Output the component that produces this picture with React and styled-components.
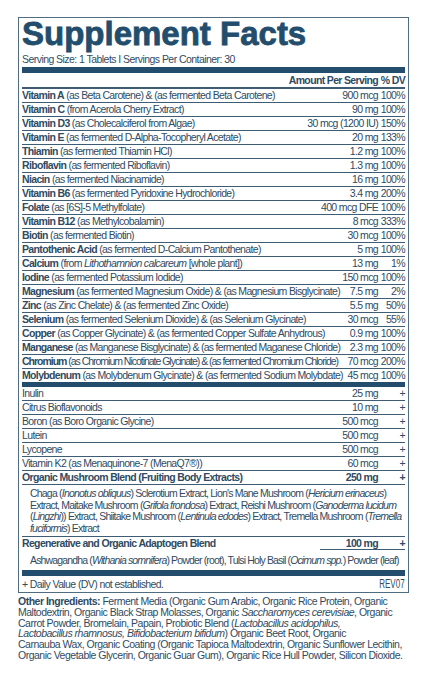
import React from 'react';
import styled, { createGlobalStyle } from 'styled-components';

const ink = '#2f4b62';
const navy = '#224d6c';
const rule = '#3e5d74';

// No narrow face installed, so the condensed label type is Arial-metric text with tightened tracking.
const Global = createGlobalStyle`
  body {
    margin: 0;
    background: #fff;
    color: ${ink};
    font-family: "Liberation Sans", Arial, sans-serif;
    letter-spacing: -0.65px;
  }
`;

const Page = styled.div`
  padding: 17px 0 0 18px;
`;

const Box = styled.section`
  box-sizing: border-box;
  width: 391px;
  border: 1px solid #4f6c81;
  padding: 1px 3px 0;
`;

const Title = styled.h1`
  margin: 0;
  font: bold 33px/30px "Liberation Sans", Arial, sans-serif;
  letter-spacing: 0;
  color: ${navy};
  -webkit-text-stroke: 0.8px ${navy};
`;

const Serving = styled.div`
  margin-top: 4px;
  font-size: 10.5px;
  line-height: 13px;
  letter-spacing: -0.55px;
`;

const Bar = styled.div`
  height: ${p => p.$h}px;
  margin-top: ${p => p.$mt || 0}px;
  background: ${navy};
`;

const Row = styled.div`
  display: flex;
  align-items: baseline;
  height: ${p => (p.$head ? 14 : 13)}px;
  line-height: ${p => (p.$head ? 15 : 13)}px;
  font-size: 10.5px;
  white-space: nowrap;
  font-weight: ${p => (p.$bold ? 'bold' : 'normal')};
  border-bottom: ${p => (p.$line === 0 ? 'none' : `${p.$line || 1}px solid ${rule}`)};
`;

const Name = styled.span`
  flex: 1 1 auto;
  min-width: 0;
  overflow: hidden;
  letter-spacing: ${p => p.$squeeze || -0.65}px;
  b { font-weight: bold; }
`;

const Amount = styled.span`
  flex: none;
  padding-left: 2px;
  text-align: right;
`;

const Dv = styled.span`
  flex: none;
  width: 27px;
  text-align: right;
`;

const Tail = styled.span`
  display: flex;
  align-items: baseline;
  align-self: flex-end;
  padding-left: 24px;
  line-height: 12px;
  border-bottom: 1px solid ${rule};
`;

const Desc = styled.div`
  padding: ${p => p.$pad || '3px 0 2px'};
  padding-left: 8px;
  font-size: 10.5px;
  line-height: ${p => p.$lh || 11.5}px;
  letter-spacing: ${p => p.$squeeze || -0.8}px;
  white-space: nowrap;
  border-bottom: ${p => (p.$line ? `1px solid ${rule}` : 'none')};
`;

const Footer = styled.div`
  display: flex;
  justify-content: space-between;
  align-items: baseline;
  height: 16px;
  line-height: 16px;
  font-size: 10.5px;
  letter-spacing: -0.6px;
`;

const Rev = styled.span`
  display: inline-block;
  font-size: 12.5px;
  letter-spacing: 0;
  transform: scaleX(0.64);
  transform-origin: right center;
`;

const Other = styled.p`
  margin: 3px 0 0;
  font-size: 10.5px;
  line-height: 10.8px;
  letter-spacing: -0.5px;
  white-space: nowrap;
  b { font-weight: bold; }
`;

const vitamins = [
  ['Vitamin A', ' (as Beta Carotene) & (as fermented Beta Carotene)', '900 mcg', '100%'],
  ['Vitamin C', ' (from Acerola Cherry Extract)', '90 mg', '100%'],
  ['Vitamin D3', ' (as Cholecalciferol from Algae)', '30 mcg (1200 IU)', '150%'],
  ['Vitamin E', ' (as fermented D-Alpha-Tocopheryl Acetate)', '20 mg', '133%'],
  ['Thiamin', ' (as fermented Thiamin HCl)', '1.2 mg', '100%'],
  ['Riboflavin', ' (as fermented Riboflavin)', '1.3 mg', '100%'],
  ['Niacin', ' (as fermented Niacinamide)', '16 mg', '100%'],
  ['Vitamin B6', ' (as fermented Pyridoxine Hydrochloride)', '3.4 mg', '200%'],
  ['Folate', ' (as [6S]-5 Methylfolate)', '400 mcg DFE', '100%'],
  ['Vitamin B12', ' (as Methylcobalamin)', '8 mcg', '333%'],
  ['Biotin', ' (as fermented Biotin)', '30 mcg', '100%'],
  ['Pantothenic Acid', ' (as fermented D-Calcium Pantothenate)', '5 mg', '100%'],
  ['Calcium', <> (from <i>Lithothamnion calcareum</i> [whole plant])</>, '13 mg', '1%'],
  ['Iodine', ' (as fermented Potassium Iodide)', '150 mcg', '100%'],
  ['Magnesium', ' (as fermented Magnesium Oxide) & (as Magnesium Bisglycinate)', '7.5 mg', '2%'],
  ['Zinc', ' (as Zinc Chelate) & (as fermented Zinc Oxide)', '5.5 mg', '50%'],
  ['Selenium', ' (as fermented Selenium Dioxide) & (as Selenium Glycinate)', '30 mcg', '55%'],
  ['Copper', ' (as Copper Glycinate) & (as fermented Copper Sulfate Anhydrous)', '0.9 mg', '100%'],
  ['Manganese', ' (as Manganese Bisglycinate) & (as fermented Maganese Chloride)', '2.3 mg', '100%', -0.72],
  ['Chromium', ' (as Chromium Nicotinate Glycinate) & (as fermented Chromium Chloride)', '70 mcg', '200%', -1.02],
  ['Molybdenum', ' (as Molybdenum Glycinate) & (as fermented Sodium Molybdate)', '45 mcg', '100%'],
];

const others = [
  ['Inulin', '25 mg'],
  ['Citrus Bioflavonoids', '10 mg'],
  ['Boron (as Boro Organic Glycine)', '500 mcg'],
  ['Lutein', '500 mcg'],
  ['Lycopene', '500 mcg'],
  ['Vitamin K2 (as Menaquinone-7 (MenaQ7®))', '60 mcg'],
];

export default function App() {
  return (
    <Page>
      <Global />
      <Box>
        <Title>Supplement Facts</Title>
        <Serving>Serving Size: 1 Tablets I Servings Per Container: 30</Serving>
        <Bar $h={6} $mt={1} />
        <Row $head $bold $line={2}>
          <Name />
          <Amount>Amount Per Serving</Amount>
          <Dv>% DV</Dv>
        </Row>
        {vitamins.map(([name, src, amt, dv, sq], i) => (
          <Row key={name} $line={i === vitamins.length - 1 ? 0 : 1}>
            <Name $squeeze={sq}><b>{name}</b>{src}</Name>
            <Amount>{amt}</Amount>
            <Dv>{dv}</Dv>
          </Row>
        ))}
        <Bar $h={5} />
        {others.map(([name, amt]) => (
          <Row key={name}>
            <Name>{name}</Name>
            <Amount>{amt}</Amount>
            <Dv>+</Dv>
          </Row>
        ))}
        <Row $bold>
          <Name>Organic Mushroom Blend (Fruiting Body Extracts)</Name>
          <Amount>250 mg</Amount>
          <Dv>+</Dv>
        </Row>
        <Desc $line>
          Chaga (<i>Inonotus obliquus</i>) Sclerotium Extract, Lion's Mane Mushroom (<i>Hericium erinaceus</i>)<br />
          Extract, Maitake Mushroom (<i>Grifola frondosa</i>) Extract, Reishi Mushroom (<i>Ganoderma lucidum</i><br />
          (<i>Lingzhi</i>)) Extract, Shiitake Mushroom (<i>Lentinula edodes</i>) Extract, Tremella Mushroom (<i>Tremella</i><br />
          <i>fuciformis</i>) Extract
        </Desc>
        <Row $bold $line={0}>
          <Name>Regenerative and Organic Adaptogen Blend</Name>
          <Tail>
            <Amount>100 mg</Amount>
            <Dv>+</Dv>
          </Tail>
        </Row>
        <Desc $pad="4px 0 4px" $lh={12} $squeeze={-0.85}>
          Ashwagandha (<i>Withania somnifera</i>) Powder (root), Tulsi Holy Basil (<i>Ocimum spp.</i>) Powder (leaf)
        </Desc>
        <Bar $h={6} />
        <Footer>
          <span>+ Daily Value (DV) not established.</span>
          <Rev>REV07</Rev>
        </Footer>
      </Box>
      <Other>
        <b>Other Ingredients:</b> Ferment Media (Organic Gum Arabic, Organic Rice Protein, Organic<br />
        Maltodextrin, Organic Black Strap Molasses, Organic <i>Saccharomyces cerevisiae</i>, Organic<br />
        Carrot Powder, Bromelain, Papain, Probiotic Blend (<i>Lactobacillus acidophilus,</i><br />
        <i>Lactobacillus rhamnosus, Bifidobacterium bifidum</i>) Organic Beet Root, Organic<br />
        Carnauba Wax, Organic Coating (Organic Tapioca Maltodextrin, Organic Sunflower Lecithin,<br />
        Organic Vegetable Glycerin, Organic Guar Gum), Organic Rice Hull Powder, Silicon Dioxide.
      </Other>
    </Page>
  );
}
